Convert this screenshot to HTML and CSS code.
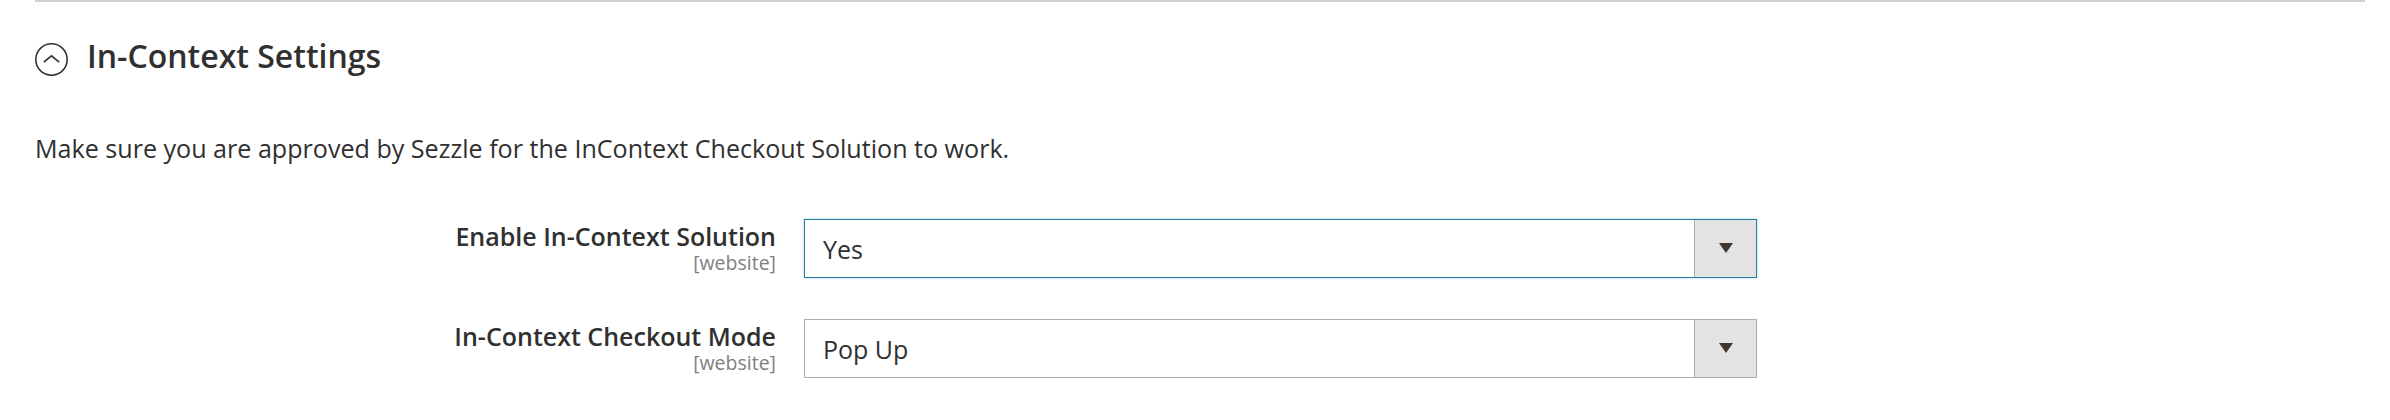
FILE: index.html
```html
<!DOCTYPE html>
<html lang="en">
<head>
    <meta charset="UTF-8">
    <title>In-Context Settings</title>
    <link rel="stylesheet" href="styles.css">
</head>
<body>
    <div class="section">
        <div class="section-head">
            <span class="toggle">
                <svg width="33" height="33" viewBox="0 0 32 32">
                    <circle cx="16" cy="16" r="15.2" fill="none" stroke="#303030" stroke-width="1.5"/>
                    <path d="M8.5 18.5 L16 12.5 L23.5 18.5" fill="none" stroke="#303030" stroke-width="1.6"/>
                </svg>
            </span>
            <h2>In-Context Settings</h2>
        </div>

        <p class="comment">Make sure you are approved by Sezzle for the InContext Checkout Solution to work.</p>

        <div class="field">
            <div class="label">
                <span class="label-text">Enable In-Context Solution</span>
                <span class="scope">[website]</span>
            </div>
            <div class="select focused">
                <span class="value">Yes</span>
                <span class="arrow"><i></i></span>
            </div>
        </div>

        <div class="field">
            <div class="label">
                <span class="label-text">In-Context Checkout Mode</span>
                <span class="scope">[website]</span>
            </div>
            <div class="select">
                <span class="value">Pop Up</span>
                <span class="arrow"><i></i></span>
            </div>
        </div>
    </div>
</body>
</html>
```

FILE: styles.css
```css
:root {
    --text-color: #303030;
    --border-color: #adadad;
    --focus-color: #2f7ba0;
}
body {
    margin: 0;
    padding: 0;
    background-color: #fff;
    color: var(--text-color);
    font-family: 'Open Sans', 'Noto Sans', sans-serif;
}
.section {
    margin: 0 25px 0 35px;
    border-top: 2px solid #d0d0d0;
}
.section-head {
    display: flex;
    align-items: flex-start;
    gap: 19px;
    margin-top: 34px;
}
.toggle {
    display: block;
    width: 33px;
    height: 33px;
    margin-top: 7px;
}
.toggle svg {
    display: block;
}
h2 {
    margin: 0;
    font-size: 32px;
    line-height: 40px;
    font-weight: 600;
}
.comment {
    margin: 56px 0 0;
    font-size: 25.1px;
    line-height: 32px;
}
.field {
    display: grid;
    grid-template-columns: 741px 953px;
    column-gap: 28px;
    margin-top: 55px;
}
.field + .field {
    margin-top: 41px;
}
.label {
    display: flex;
    flex-direction: column;
    align-items: flex-end;
    padding-top: 1px;
}
.label-text {
    font-size: 25px;
    line-height: 32px;
    font-weight: 600;
}
.scope {
    font-size: 19.5px;
    line-height: 22px;
    color: #808080;
}
.select {
    display: flex;
    height: 57px;
    border: 1px solid var(--border-color);
    background-color: #fff;
}
.select.focused {
    border-color: var(--focus-color);
    box-shadow: 0 0 2px rgba(80, 170, 210, 0.6);
}
.value {
    flex: 1;
    padding: 1px 0 0 18px;
    font-size: 25px;
    line-height: 57px;
}
.arrow {
    display: flex;
    align-items: center;
    justify-content: center;
    width: 61px;
    border-left: 1px solid var(--border-color);
    background-color: #e3e3e3;
}
.arrow i {
    display: block;
    margin-top: -2px;
    border-left: 7px solid transparent;
    border-right: 7px solid transparent;
    border-top: 10px solid #41362f;
}
```
